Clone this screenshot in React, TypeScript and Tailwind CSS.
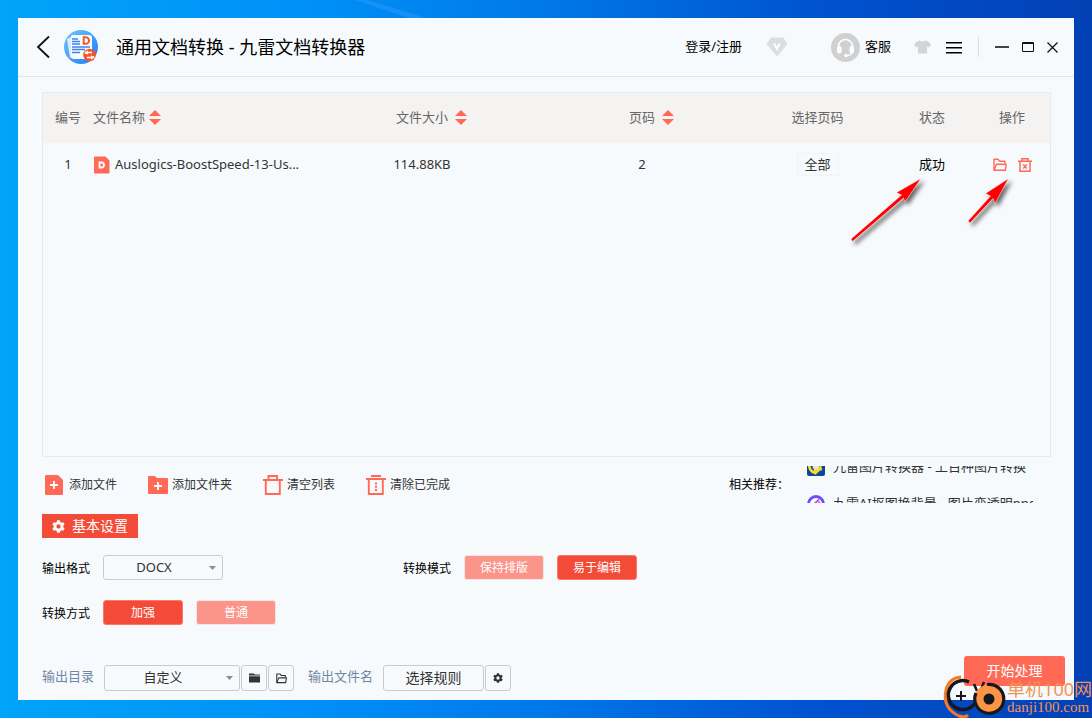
import { useState } from "react";
import type { ReactNode } from "react";

type SelectProps = {
  id: string;
  options: string[];
  className: string;
};

const recommendations = ["九雷图片转换器 - 上百种图片转换", "九雷AI抠图换背景 - 图片变透明png"];

function SortIcon() {
  return (
    <svg width="12" height="16" viewBox="0 0 12 16" fill="#ff6956">
      <path d="M6 0 12 6H0z" />
      <path d="M6 15 12 9H0z" />
    </svg>
  );
}

function GearIcon({ size }: { size: number }) {
  return (
    <svg width={size} height={size} viewBox="0 0 24 24" fill="currentColor" fillRule="evenodd">
      <path d="M9.500.5h5l.8 3.300 2.200 1.300 3.300-1 2.500 4.300-2.500 2.300v2.600l2.500 2.300-2.500 4.300-3.300-1-2.200 1.300-.8 3.300h-5l-.8-3.300-2.200-1.300-3.300 1L.7 15.600l2.500-2.300v-2.600L.7 8.400l2.500-4.300 3.300 1 2.200-1.300zM12 8a4 4 0 1 0 0 8 4 4 0 1 0 0-8z" />
    </svg>
  );
}

function OpenFolderIcon({ size }: { size: number }) {
  return (
    <svg
      width={size}
      height={size}
      viewBox="0 0 14 14"
      fill="none"
      stroke="currentColor"
      strokeWidth="1.4"
      strokeLinejoin="round"
    >
      <path d="M1 12.300V1.200h4l1.500 2h5.500v2.300" />
      <path d="M1 12.300 3.500 6.200h9.800l-1 6.100z" />
    </svg>
  );
}

function LogoIcon() {
  return (
    <svg width="34" height="34" viewBox="0 0 34 34">
      <defs>
        <linearGradient id="logo" x1="0" y1="0" x2="1" y2="1">
          <stop offset="0" stopColor="#6fc8fb" />
          <stop offset="1" stopColor="#1f78f8" />
        </linearGradient>
      </defs>
      <circle cx="17" cy="17" r="17" fill="url(#logo)" />
      <path d="M3 9l4-2 2 20-3 1z" fill="#d6edff" />
      <path d="M8 5h17a3 3 0 0 1 3 3v14l-5 7H10a3 3 0 0 1-3-3V6z" fill="#f8fcff" />
      <g stroke="#3c83ee" strokeWidth="1.500">
        <path d="M8 9h6M8 11.500h8M8 14h8M8 17h18M8 19.500h13M8 22.500h8" />
      </g>
      <path
        d="M19.700 7.200h2a3.200 3.200 0 0 1 0 6.600h-2z"
        fill="none"
        stroke="#f0592b"
        strokeWidth="2"
      />
      <circle cx="25.500" cy="25" r="6.300" fill="#f4562a" />
      <path d="M21.500 24v-1.500h6.500M29.500 26v1.500H23" fill="none" stroke="#fff" strokeWidth="1.300" />
      <path d="M21 22.500l3-2.300v4.600zM30 27.500l-3-2.300v4.600z" fill="#fff" />
    </svg>
  );
}

function TitleBar() {
  return (
    <header className="flex h-[59px] items-center border-b border-[#e2e4e6] pr-4 pl-[18px] text-[13px] text-black">
      <button aria-label="返回">
        <svg width="14" height="24" viewBox="0 0 14 24" fill="none" stroke="#111" strokeWidth="1.800">
          <path d="M13 1.500 2 12l11 10.500" />
        </svg>
      </button>
      <div className="ml-[14px]">
        <LogoIcon />
      </div>
      <h1 className="ml-[18px] text-lg whitespace-nowrap">通用文档转换 - 九雷文档转换器</h1>
      <button className="ml-auto whitespace-nowrap">登录/注册</button>
      <button className="ml-6" aria-label="会员">
        <svg width="22" height="20" viewBox="0 0 22 20">
          <path d="M5 .5h12l4.500 6.500L11 19.500.5 7z" fill="#dcdddf" />
          <path d="m8.300 6.500 2.700 5.500 2.700-5.500" fill="none" stroke="#fff" strokeWidth="2" />
        </svg>
      </button>
      <button className="ml-[43px] flex items-center gap-[5px] whitespace-nowrap">
        <svg width="29" height="29" viewBox="0 0 29 29">
          <circle cx="14.500" cy="14.500" r="14.500" fill="#d0d0d0" />
          <path
            d="M7.500 15v-1.500a7 7 0 0 1 14 0V18a5 5 0 0 1-5 4.500"
            fill="none"
            stroke="#fff"
            strokeWidth="1.600"
          />
          <rect x="6" y="13" width="4.500" height="7.500" rx="2" fill="#fff" />
          <rect x="18.500" y="13" width="4.500" height="7.500" rx="2" fill="#fff" />
          <circle cx="15" cy="22.500" r="1.800" fill="#fff" />
        </svg>
        客服
      </button>
      <button className="ml-[23px]" aria-label="皮肤">
        <svg width="17" height="14" viewBox="0 0 17 14" fill="#d3d4d5">
          <path d="M5.500.5q3 2 6 0L15 2l2 3.500-2.500 2-1.500-1V13.500H4V6.500l-1.500 1L0 5.500 2 2z" />
        </svg>
      </button>
      <button className="ml-[15px]" aria-label="菜单">
        <svg width="16" height="13" viewBox="0 0 16 13" fill="#000">
          <path d="M0 1h16v1.500H0zM0 6h16v1.500H0zM0 11h16v1.500H0z" />
        </svg>
      </button>
      <span className="ml-4 h-5 w-px bg-[#dcdfe1]" />
      <button className="ml-4" aria-label="最小化">
        <svg width="14" height="12" viewBox="0 0 14 12" fill="#444">
          <path d="M0 5h14v2H0z" />
        </svg>
      </button>
      <button className="ml-[13px]" aria-label="最大化">
        <svg width="12" height="10" viewBox="0 0 12 10" fill="none" stroke="#111">
          <path d="M.5.5h11v9H.5zM0 1.500h12" />
        </svg>
      </button>
      <button className="ml-[13px]" aria-label="关闭">
        <svg width="11" height="11" viewBox="0 0 11 11" fill="none" stroke="#111" strokeWidth="1.300">
          <path d="m.5.5 10 10M10.500.5l-10 10" />
        </svg>
      </button>
    </header>
  );
}

function FileTable() {
  return (
    <table className="w-full table-fixed text-center text-[13px] text-[#333]">
      <colgroup>
        <col className="w-[50px]" />
        <col />
        <col className="w-[234px]" />
        <col className="w-[206px]" />
        <col className="w-[145px]" />
        <col className="w-[84px]" />
        <col className="w-[76px]" />
      </colgroup>
      <thead className="bg-[#f5f3f2] text-[#666]">
        <tr className="h-[50px]">
          <th className="font-normal">编号</th>
          <th className="font-normal">
            <span className="flex items-center gap-1">
              文件名称
              <SortIcon />
            </span>
          </th>
          <th className="font-normal">
            <span className="flex items-center justify-center gap-[7px] pl-[19px]">
              文件大小
              <SortIcon />
            </span>
          </th>
          <th className="font-normal">
            <span className="flex items-center justify-center gap-[7px] pl-[19px]">
              页码
              <SortIcon />
            </span>
          </th>
          <th className="font-normal">选择页码</th>
          <th className="font-normal">状态</th>
          <th className="font-normal">操作</th>
        </tr>
      </thead>
      <tbody>
        <tr className="h-[43px]">
          <td>1</td>
          <td>
            <span className="flex items-center gap-[5px] pl-px whitespace-nowrap">
              <svg width="16" height="18" viewBox="0 0 16 18" className="shrink-0">
                <path
                  d="M1 .5h10.500l4 4V16.500a1 1 0 0 1-1 1H1a1 1 0 0 1-1-1v-15a1 1 0 0 1 1-1z"
                  fill="#ff6956"
                />
                <path
                  d="M5.500 6.500h2a2.500 2.500 0 0 1 0 5h-2z"
                  fill="none"
                  stroke="#fff"
                  strokeWidth="1.800"
                />
              </svg>
              Auslogics-BoostSpeed-13-Us...
            </span>
          </td>
          <td>114.88KB</td>
          <td>2</td>
          <td>
            <button className="h-[23px] w-[42px] border border-[#f1f3f5]">全部</button>
          </td>
          <td className="text-black">成功</td>
          <td>
            <span className="flex items-center justify-center gap-[11px] text-[#ff6956]">
              <button aria-label="打开文件夹">
                <OpenFolderIcon size={14} />
              </button>
              <button aria-label="删除">
                <svg
                  width="14"
                  height="14"
                  viewBox="0 0 14 14"
                  fill="none"
                  stroke="currentColor"
                  strokeWidth="1.500"
                >
                  <path d="M0 3.200h14M4 3V.8h6V3M2 3.500v9.700h10V3.500M5.200 6.500l3.600 4M8.800 6.500l-3.600 4" />
                </svg>
              </button>
            </span>
          </td>
        </tr>
      </tbody>
    </table>
  );
}

function Arrows() {
  return (
    <svg
      width="170"
      height="80"
      viewBox="845 173 170 80"
      className="pointer-events-none absolute top-[80px] right-[35px] drop-shadow-[3px_3px_2px_rgba(0,0,0,0.6)]"
      fill="#fe0000"
      stroke="#fff"
      strokeWidth="0.500"
    >
      <path d="M921 178.500 896.500 192.500l5 2.500-50.500 44 1.500 2.500 51-43.500 1.500 4z" />
      <path d="M1008.500 178.500l-23 15 5 2.500-22.500 25 2 2 23-24.500 2 5z" />
    </svg>
  );
}

function ToolButton({ label, children }: { label: string; children: ReactNode }) {
  return (
    <button className="flex items-center gap-1 whitespace-nowrap">
      <svg width="20" height="20" viewBox="0 0 20 20" fill="#ff6956">
        {children}
      </svg>
      {label}
    </button>
  );
}

function Toolbar() {
  return (
    <div className="mt-[9px] flex h-[37px] items-center pr-[18px] pl-[3px] text-xs text-[#333]">
      <div className="flex gap-[31px]">
        <ToolButton label="添加文件">
          <path d="M1 0h12l5 5v14a1 1 0 0 1-1 1H1a1 1 0 0 1-1-1V1a1 1 0 0 1 1-1z" />
          <path d="M9 6v8M5 10h8" stroke="#fff" strokeWidth="1.800" />
        </ToolButton>
        <ToolButton label="添加文件夹">
          <path d="M0 2a1 1 0 0 1 1-1h6l2 2H19a1 1 0 0 1 1 1V18a1 1 0 0 1-1 1H1a1 1 0 0 1-1-1z" />
          <path d="M10 7v8M6 11h8" stroke="#fff" strokeWidth="1.800" />
        </ToolButton>
        <ToolButton label="清空列表">
          <path
            d="M0 5h20M5.500 4.500V1H14v3.500M2.800 5v14h14V5"
            fill="none"
            stroke="#ff6956"
            strokeWidth="1.900"
          />
        </ToolButton>
        <ToolButton label="清除已完成">
          <path d="M0 4h20M5 1h10M2.800 4v15h14V4" fill="none" stroke="#ff6956" strokeWidth="1.900" />
          <path d="M9 7.500h2v2H9zM9 10.800h2v2H9zM9 14h2v2H9z" />
        </ToolButton>
      </div>
      <span className="ml-auto whitespace-nowrap text-black">相关推荐：</span>
      <ul className="ml-[18px] h-[37px] w-[226px] overflow-hidden text-[13px]">
        {recommendations.map((name, i) => (
          <li
            key={name}
            className="flex h-[37px] items-center gap-2 overflow-hidden whitespace-nowrap first:-mt-[18px]"
          >
            {i === 0 ? (
              <svg width="18" height="18" viewBox="0 0 18 18" className="shrink-0">
                <rect width="18" height="18" rx="2" fill="#10459d" />
                <path d="M2 6q0 7 6 9v-3l7-1" fill="none" stroke="#f5df2c" strokeWidth="2.600" />
                <circle cx="9" cy="8" r="3.500" fill="#e8e2d8" />
                <path d="M13 4q2 4-1 8l-3 3" fill="none" stroke="#f5df2c" strokeWidth="2" />
              </svg>
            ) : (
              <svg width="18" height="18" viewBox="0 0 18 18" className="shrink-0">
                <circle cx="9" cy="9" r="7.500" fill="#fff" stroke="#6a4df4" strokeWidth="2.800" />
                <path d="M5 11l7-6.500M8 12l5-5" stroke="#c447d8" strokeWidth="1.800" />
              </svg>
            )}
            {name}
          </li>
        ))}
      </ul>
    </div>
  );
}

function Select({ id, options, className }: SelectProps) {
  return (
    <div className={`relative ${className}`}>
      <select
        id={id}
        className="h-full w-full appearance-none rounded-[3px] border border-[#c9cccf] pr-[18px] text-center text-[13px] text-[#333] [text-align-last:center]"
      >
        {options.map((o) => (
          <option key={o}>{o}</option>
        ))}
      </select>
      <svg
        width="7"
        height="4"
        viewBox="0 0 7 4"
        fill="#8b8e91"
        className="pointer-events-none absolute top-1/2 right-[7px] -mt-[2px]"
      >
        <path d="M0 0h7L3.500 4z" />
      </svg>
    </div>
  );
}

function Choice({ options, initial, label }: { options: string[]; initial: string; label: string }) {
  const [value, setValue] = useState(initial);
  return (
    <div role="group" aria-label={label} className="flex gap-[13px]">
      {options.map((o) => (
        <button
          key={o}
          aria-pressed={o === value}
          onClick={() => setValue(o)}
          className={`h-[25px] w-20 rounded-[3px] border text-white ${
            o === value ? "border-[#ff7767] bg-[#f44b39]" : "border-[#f6e4e6] bg-[#fb9489]"
          }`}
        >
          {o}
        </button>
      ))}
    </div>
  );
}

function Settings() {
  return (
    <section className="text-xs text-black">
      <h2 className="mt-[11px] flex h-6 w-24 items-center gap-[7px] bg-[#f44b39] pl-[10px] text-sm whitespace-nowrap text-white">
        <GearIcon size={13} />
        基本设置
      </h2>
      <div className="mt-[17px] flex items-center">
        <label htmlFor="format" className="w-[61px] pt-[2px]">
          输出格式
        </label>
        <Select id="format" options={["DOCX", "DOC", "PDF"]} className="h-[25px] w-[120px]" />
        <span className="ml-[180px] w-[61px] pt-[2px]">转换模式</span>
        <Choice label="转换模式" options={["保持排版", "易于编辑"]} initial="易于编辑" />
      </div>
      <div className="mt-5 flex items-center">
        <span className="w-[61px] pt-[2px]">转换方式</span>
        <Choice label="转换方式" options={["加强", "普通"]} initial="加强" />
      </div>
    </section>
  );
}

function IconButton({ label, children }: { label: string; children: ReactNode }) {
  return (
    <button
      aria-label={label}
      className="ml-px flex h-[26px] w-[26px] items-center justify-center rounded-[3px] border border-[#c9cccf] text-[#333]"
    >
      {children}
    </button>
  );
}

function Footer() {
  return (
    <footer className="mt-[31px] mb-[9px] flex h-[35px] items-end pr-[9px] pl-6 text-[13px] text-[#6f87a5]">
      <div className="flex items-center">
        <label htmlFor="folder" className="w-[62px] pb-[2px]">
          输出目录
        </label>
        <Select id="folder" options={["自定义", "原文件目录"]} className="h-[26px] w-[136px]" />
        <IconButton label="选择目录">
          <svg width="11" height="10" viewBox="0 0 11 10" fill="currentColor">
            <path d="M0 .5h4.500L6 1.500h5v1H0zM0 3.200h11v6.300H0z" />
          </svg>
        </IconButton>
        <IconButton label="打开目录">
          <OpenFolderIcon size={11} />
        </IconButton>
        <span className="ml-[14px] pb-[2px]">输出文件名</span>
        <button className="ml-[10px] h-[26px] w-[101px] rounded-[3px] border border-[#c9cccf] text-sm text-[#333]">
          选择规则
        </button>
        <IconButton label="规则设置">
          <GearIcon size={10} />
        </IconButton>
      </div>
      <button className="ml-auto h-[30px] w-[101px] self-start rounded-[3px] bg-[#ff6956] text-sm text-white">
        开始处理
      </button>
    </footer>
  );
}

function Watermark() {
  return (
    <div className="pointer-events-none absolute right-0 bottom-0 flex items-start text-[#f39255]">
      <svg width="64" height="43" viewBox="0 0 64 43" fill="none">
        <path d="M18 2Q6 3 3 15q-4 18 13 26 6 2 9-1" stroke="#f9791f" strokeWidth="3" />
        <path d="M26 7A14.500 14.500 0 1 0 32 28" stroke="#17171d" strokeWidth="3.500" />
        <path d="M18 16v10M13 21h10" stroke="#17171d" strokeWidth="2" />
        <path d="M31 9l3 7M41 7l-4 10" stroke="#17171d" strokeWidth="2.500" />
        <circle cx="46" cy="24" r="14.500" fill="#fb9545" />
        <path d="M44 9.500A14.500 14.500 0 1 1 33 18" stroke="#17171d" strokeWidth="3.200" />
        <circle cx="46" cy="24" r="5.500" fill="#17171d" />
      </svg>
      <div className="whitespace-nowrap">
        <p className="mt-1 text-lg leading-5">单机100网</p>
        <p className="font-['Liberation_Serif',serif] text-[15px] leading-4">danji100.com</p>
      </div>
    </div>
  );
}

export default function App() {
  return (
    <div className="relative flex min-h-screen overflow-hidden bg-linear-[to_right,#00a4f8,#0090f8_28%,#0078e8_50%,#0052d0_75%,#0340b5] p-[18px] font-['Noto_Sans','Noto_Sans_CJK_SC',sans-serif]">
      <svg width="72" height="18" viewBox="0 0 72 18" className="absolute top-0 left-[355px]">
        <path d="M0 0h12l60 18H54z" fill="#49a8ff" fillOpacity="0.300" />
      </svg>
      <main className="flex flex-1 flex-col bg-[#f7fafc]">
        <TitleBar />
        <div className="mt-[15px] mr-[23px] ml-6 flex flex-1 flex-col">
          <div className="relative flex-1 border border-[#e8eaec]">
            <FileTable />
            <Arrows />
          </div>
          <Toolbar />
          <Settings />
        </div>
        <Footer />
      </main>
      <Watermark />
    </div>
  );
}
